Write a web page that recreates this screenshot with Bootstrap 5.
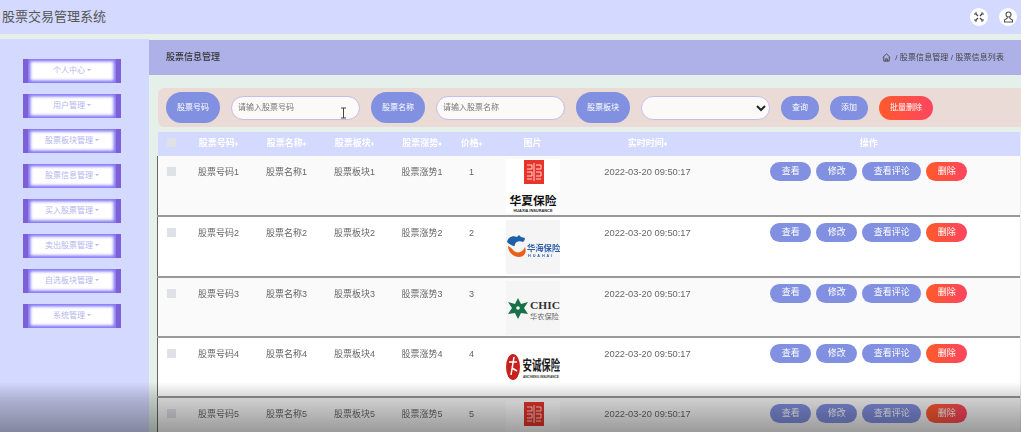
<!DOCTYPE html>
<html lang="zh-CN">

<head>
    <meta charset="UTF-8">
    <title>股票交易管理系统</title>
    <link rel="stylesheet" href="https://cdn.jsdelivr.net/npm/bootstrap@5.3.3/dist/css/bootstrap.min.css">
    <style>
        html, body { height: 432px; overflow: hidden; }
        body { background: #e5f0ea; font-family: "Liberation Sans", "Noto Sans CJK SC", sans-serif; font-size: 9px; color: #666; }
        .page-wrap { filter: blur(.45px); height: 432px; overflow: hidden; }
        .top-bar { height: 34px; background: #d4d9ff; padding: 0 3px 0 2px; margin-bottom: 5px; }
        .sys-title { font-size: 13px; color: #555; }
        .round-ico { width: 18px; height: 18px; background: #fff; border-radius: 50%; }
        .top-icons { gap: 11px; margin-right: 1px; }
        .side-bar { width: 149px; height: 393px; background: #d4d9ff; padding: 20px 0 0 23px; gap: 11px; }
        .side-btn { width: 98px; height: 24px; padding: 0; background: #fff; color: #b4b6f0; font-size: 8px; border-radius: 0; border: solid #7d5fd6; border-width: 0 5px; box-shadow: inset 0 0 3px 2.5px #8478f5; }
        .side-btn:hover { background: #fff; color: #9a9cf0; }
        .main-area { min-width: 0; height: 393px; overflow: hidden; }
        .title-bar { height: 35px; margin-top: 1px; background: #adb1e8; padding: 0 17px; color: #333; }
        .title-bar b { font-size: 9px; font-weight: 500; }
        .crumbs { font-size: 8px; color: #444; letter-spacing: .1px; }
        .search-box { height: 39px; margin: 13px 0 5px 9px; padding: 0 8px; background: #ebdbd6; border-radius: 6px 0 0 6px; gap: 11px; }
        .pill-label, .pill-btn, .op-btn { border: 0; color: #fff; background: #8190e0; padding: 0; }
        .pill-label { width: 54px; height: 31px; border-radius: 16px; font-size: 8px; }
        .pill-btn { height: 24px; width: 38px; border-radius: 12px; font-size: 8px; }
        .pill-red, .op-red { background: linear-gradient(90deg, #ff5a2b, #ff4560); }
        .pill-wide { width: 54px; }
        .pill-input { width: 129px; height: 24px; padding: 0 6px; font-size: 8px; border: 1.5px solid #c5bfe8; border-radius: 12px; background-color: #fbfaf8; box-shadow: none; }
        .pill-input::placeholder { color: #777; }
        .pill-select { appearance: auto; background-image: none; padding-right: 0; }
        .ibeam { position: absolute; left: 340px; top: 107px; }
        .table-wrap { margin-left: 8px; }
        .stock-table { table-layout: fixed; width: 863px; margin: 0; }
        .stock-table thead th { height: 24px; padding: 0; background: #d4d9ff; color: #fff !important; font-size: 9px; font-weight: 700; text-align: center; vertical-align: middle; border: 0; }
        .stock-table td { height: 60.25px; padding: 10px 0 0; text-align: center; vertical-align: top; background: #fff; color: #666; font-size: 9px; border: 0; border-bottom: 2px solid #999; box-shadow: none; }
        .stock-table td:first-child { border-left: 1px solid #666; }
        .stock-table tr.odd-row td { background: #fafafa; }
        .stock-table td.img-cell { padding: 3px 0 0 18px; text-align: left; }
        .stock-table td.op-cell { padding-top: 6px; text-align: center; }
        .stock-table td.time-cell { font-size: 9.3px; }
        .w-chk { width: 27px; } .w-txt { width: 68px; } .w-trend { width: 67px; } .w-price { width: 32px; }
        .w-img { width: 90px; } .w-time { width: 140px; }
        .chk-box { display: inline-block; width: 9px; height: 9px; background: #dee2e6; margin-top: 1px; }
        .sort-mark { font-size: 7px; }
        .op-btn { height: 19px; width: 41px; border-radius: 10px; font-size: 9px; margin-right: 5px; }
        .op-long { width: 59px; }
        .op-last { margin-right: 0; }
        .logo-img { display: block; width: 54px; height: 54px; }
        .logo-cn { font-family: "Noto Sans CJK SC", sans-serif; }
        .logo-en { font-family: "Liberation Sans", sans-serif; font-weight: 700; }
        .logo-serif { font-family: "Liberation Serif", serif; }
        .shade { position: fixed; left: 0; right: 0; bottom: 0; height: 50px; background: linear-gradient(rgba(0,0,0,0), rgba(0,0,0,.17) 32%, rgba(0,0,0,.38)); pointer-events: none; }
    </style>
</head>

<body>
    <svg width="0" height="0" class="position-absolute">
        <symbol id="seal" viewBox="0 0 20 24">
            <path d="M0 0h20v24H0z" fill="#e8342a"/>
            <path d="M10 3v18M3 5h5v4H3M12 5h5v4h-5M3 12h5v4H3M12 12h5v4h-5M3 19h5M12 19h5" stroke="#fff" stroke-width=".8" fill="none"/>
        </symbol>
    </svg>

    <div class="page-wrap">
        <!-- cabecera -->
        <header class="top-bar d-flex align-items-center justify-content-between">
            <span class="sys-title">股票交易管理系统</span>
            <div class="top-icons d-flex">
                <span class="round-ico d-flex align-items-center justify-content-center">
                    <svg width="10" height="10" viewBox="0 0 10 10" fill="none" stroke="#444" stroke-width="1.2"><path d="M2 2l2 2M8 2L6 4M2 8l2-2M8 8L6 6"/><path d="M1 3V1h2M7 1h2v2M1 7v2h2M9 7v2H7" stroke-width="1"/></svg>
                </span>
                <span class="round-ico d-flex align-items-center justify-content-center">
                    <svg width="11" height="12" viewBox="0 0 11 12" fill="none" stroke="#555" stroke-width="1.1"><circle cx="5.5" cy="3.5" r="2.5"/><path d="M4.3 6L4 7.5 1.5 9v2h8V9L7 7.5 6.7 6"/></svg>
                </span>
            </div>
        </header>

        <div class="d-flex">
            <!-- menu lateral -->
            <nav class="side-bar d-flex flex-column flex-shrink-0">
                <div class="dropdown"><button class="btn side-btn dropdown-toggle" type="button" data-bs-toggle="dropdown">个人中心</button></div>
                <div class="dropdown"><button class="btn side-btn dropdown-toggle" type="button" data-bs-toggle="dropdown">用户管理</button></div>
                <div class="dropdown"><button class="btn side-btn dropdown-toggle" type="button" data-bs-toggle="dropdown">股票板块管理</button></div>
                <div class="dropdown"><button class="btn side-btn dropdown-toggle" type="button" data-bs-toggle="dropdown">股票信息管理</button></div>
                <div class="dropdown"><button class="btn side-btn dropdown-toggle" type="button" data-bs-toggle="dropdown">买入股票管理</button></div>
                <div class="dropdown"><button class="btn side-btn dropdown-toggle" type="button" data-bs-toggle="dropdown">卖出股票管理</button></div>
                <div class="dropdown"><button class="btn side-btn dropdown-toggle" type="button" data-bs-toggle="dropdown">自选板块管理</button></div>
                <div class="dropdown"><button class="btn side-btn dropdown-toggle" type="button" data-bs-toggle="dropdown">系统管理</button></div>
            </nav>

            <main class="main-area flex-grow-1">
                <div class="title-bar d-flex align-items-center justify-content-between">
                    <b>股票信息管理</b>
                    <span class="crumbs d-flex align-items-center gap-1">
                        <svg width="9" height="9" viewBox="0 0 10 10" fill="none" stroke="#444" stroke-width="1"><path d="M.8 5L5 1l4.200 4M2 4.500V9h6V4.500M4 9V6.500h2V9"/></svg>
                        / 股票信息管理 / 股票信息列表
                    </span>
                </div>

                <!-- buscador -->
                <form class="search-box d-flex align-items-center">
                    <button type="button" class="pill-label">股票号码</button>
                    <input type="text" class="form-control pill-input" placeholder="请输入股票号码">
                    <button type="button" class="pill-label">股票名称</button>
                    <input type="text" class="form-control pill-input" placeholder="请输入股票名称">
                    <button type="button" class="pill-label">股票板块</button>
                    <select class="form-select pill-input pill-select"><option></option></select>
                    <button type="button" class="pill-btn">查询</button>
                    <button type="button" class="pill-btn">添加</button>
                    <button type="button" class="pill-btn pill-red pill-wide">批量删除</button>
                </form>

                <div class="table-wrap">
                    <table class="table stock-table">
                        <colgroup>
                            <col class="w-chk"><col class="w-txt"><col class="w-txt"><col class="w-txt"><col class="w-trend"><col class="w-price"><col class="w-img"><col class="w-time"><col>
                        </colgroup>
                        <thead>
                            <tr>
                                <th><span class="chk-box"></span></th>
                                <th>股票号码<span class="sort-mark">♦</span></th>
                                <th>股票名称<span class="sort-mark">♦</span></th>
                                <th>股票板块<span class="sort-mark">♦</span></th>
                                <th>股票涨势<span class="sort-mark">♦</span></th>
                                <th>价格<span class="sort-mark">♦</span></th>
                                <th>图片</th>
                                <th>实时时间<span class="sort-mark">♦</span></th>
                                <th>操作</th>
                            </tr>
                        </thead>
                        <tbody>
                            <tr class="odd-row">
                                <td><span class="chk-box"></span></td>
                                <td>股票号码1</td><td>股票名称1</td><td>股票板块1</td><td>股票涨势1</td><td>1</td>
                                <td class="img-cell">
                                    <svg class="logo-img" viewBox="0 0 54 54">
                                        <rect width="54" height="54" fill="#fff"/>
                                        <use href="#seal" x="18" y="1" width="20" height="24"/>
                                        <text x="27" y="46" font-size="11.800" font-weight="700" text-anchor="middle" fill="#111" class="logo-cn">华夏保险</text>
                                        <text x="27" y="53" font-size="3.900" text-anchor="middle" fill="#222" class="logo-en">HUAXIA INSURANCE</text>
                                    </svg>
                                </td>
                                <td class="time-cell">2022-03-20 09:50:17</td>
                                <td class="op-cell"><button class="op-btn">查看</button><button class="op-btn">修改</button><button class="op-btn op-long">查看评论</button><button class="op-btn op-red op-last">删除</button></td>
                            </tr>
                            <tr>
                                <td><span class="chk-box"></span></td>
                                <td>股票号码2</td><td>股票名称2</td><td>股票板块2</td><td>股票涨势2</td><td>2</td>
                                <td class="img-cell">
                                    <svg class="logo-img" viewBox="0 0 54 54">
                                        <rect width="54" height="54" fill="#f5f5f5"/>
                                        <path d="M1 22c1-5 6-7 10-5l2-2 2 2 4 1c0 2-1 3-2 4-5-2-9 1-8 4-3 0-6-2-8-4z" fill="#1d5fa8"/>
                                        <path d="M2 26c0 9 11 14 16 9 2-2 2-5 1-8-2 5-7 7-11 4-2-2-3-4-6-5z" fill="#e8601c"/>
                                        <text x="21" y="31" font-size="8.300" font-weight="700" fill="#2a5ca8" class="logo-cn">华海保险</text>
                                        <text x="22" y="37" font-size="3.800" letter-spacing="1.900" fill="#2a5ca8" class="logo-en">HUAHAI</text>
                                    </svg>
                                </td>
                                <td class="time-cell">2022-03-20 09:50:17</td>
                                <td class="op-cell"><button class="op-btn">查看</button><button class="op-btn">修改</button><button class="op-btn op-long">查看评论</button><button class="op-btn op-red op-last">删除</button></td>
                            </tr>
                            <tr class="odd-row">
                                <td><span class="chk-box"></span></td>
                                <td>股票号码3</td><td>股票名称3</td><td>股票板块3</td><td>股票涨势3</td><td>3</td>
                                <td class="img-cell">
                                    <svg class="logo-img" viewBox="0 0 54 54">
                                        <rect width="54" height="54" fill="#f5f5f5"/>
                                        <path d="M12 17l3 6 7-2-4 6 4 6-7-1-3 6-3-6-7 1 4-6-4-6 7 2z" fill="#17704a"/>
                                        <circle cx="12" cy="27" r="1.800" fill="#f5f5f5"/>
                                        <text x="24" y="28" font-size="10.500" font-weight="700" fill="#333" textLength="30" lengthAdjust="spacingAndGlyphs" class="logo-serif">CHIC</text>
                                        <text x="24" y="38" font-size="7.200" fill="#666" class="logo-cn">华农保险</text>
                                    </svg>
                                </td>
                                <td class="time-cell">2022-03-20 09:50:17</td>
                                <td class="op-cell"><button class="op-btn">查看</button><button class="op-btn">修改</button><button class="op-btn op-long">查看评论</button><button class="op-btn op-red op-last">删除</button></td>
                            </tr>
                            <tr>
                                <td><span class="chk-box"></span></td>
                                <td>股票号码4</td><td>股票名称4</td><td>股票板块4</td><td>股票涨势4</td><td>4</td>
                                <td class="img-cell">
                                    <svg class="logo-img" viewBox="0 0 54 54">
                                        <rect width="54" height="54" fill="#fff"/>
                                        <ellipse cx="7" cy="26" rx="7" ry="13" fill="#c8201c"/>
                                        <path d="M3 21h8M8 16l-3 18M6 27l5 3" stroke="#fff" stroke-width="1.500" fill="none"/>
                                        <text transform="translate(16.500 28.500) scale(1 1.500)" font-size="9.400" font-weight="700" fill="#1a1a1a" class="logo-cn">安诚保险</text>
                                        <text x="17" y="37" font-size="3.200" fill="#333" class="logo-en">ANCHENG INSURANCE</text>
                                    </svg>
                                </td>
                                <td class="time-cell">2022-03-20 09:50:17</td>
                                <td class="op-cell"><button class="op-btn">查看</button><button class="op-btn">修改</button><button class="op-btn op-long">查看评论</button><button class="op-btn op-red op-last">删除</button></td>
                            </tr>
                            <tr class="odd-row">
                                <td><span class="chk-box"></span></td>
                                <td>股票号码5</td><td>股票名称5</td><td>股票板块5</td><td>股票涨势5</td><td>5</td>
                                <td class="img-cell">
                                    <svg class="logo-img" viewBox="0 0 54 54">
                                        <rect width="54" height="54" fill="#fff"/>
                                        <use href="#seal" x="18" y="1" width="20" height="24"/>
                                    </svg>
                                </td>
                                <td class="time-cell">2022-03-20 09:50:17</td>
                                <td class="op-cell"><button class="op-btn">查看</button><button class="op-btn">修改</button><button class="op-btn op-long">查看评论</button><button class="op-btn op-red op-last">删除</button></td>
                            </tr>
                        </tbody>
                    </table>
                </div>
            </main>
        </div>

        <!-- cursor de texto y sombra inferior del video -->
        <svg class="ibeam" width="7" height="12" viewBox="0 0 7 12" fill="none" stroke="#444" stroke-width="1"><path d="M1 1h5M3.500 1v10M1 11h5"/></svg>
        <div class="shade"></div>
    </div>
    <script src="https://cdn.jsdelivr.net/npm/bootstrap@5.3.3/dist/js/bootstrap.bundle.min.js"></script>
</body>

</html>
